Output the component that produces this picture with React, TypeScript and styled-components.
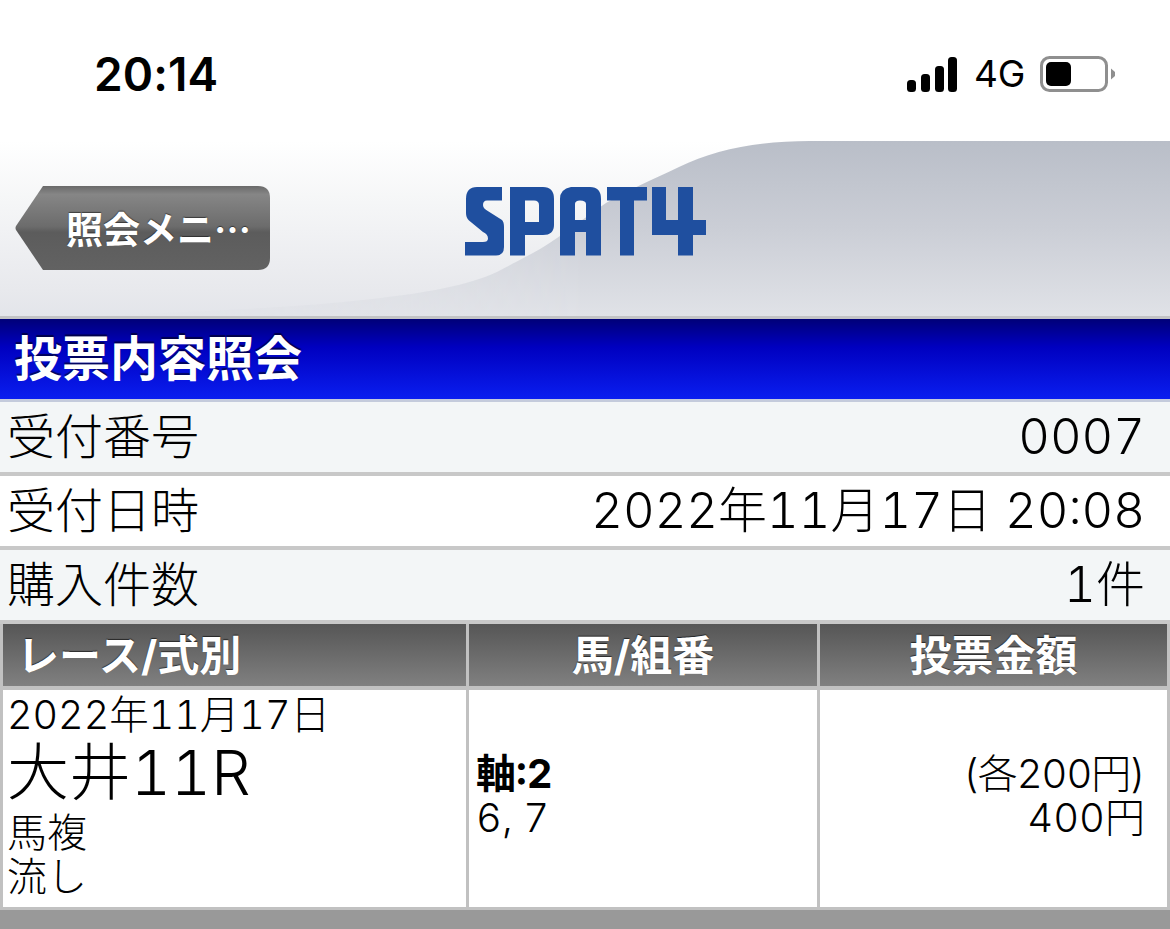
import React from "react";
import styled, { createGlobalStyle } from "styled-components";

const Global = createGlobalStyle`
  html, body { margin: 0; padding: 0; background: #fff; }
  body {
    font-family: "Inter", "Noto Sans CJK JP", sans-serif;
    font-variant-numeric: tabular-nums;
    color: #000;
  }
  * { box-sizing: border-box; }
`;

const Page = styled.div`
  width: 1170px;
  height: 929px;
  overflow: hidden;
  display: flex;
  flex-direction: column;
  background: #999;
`;

const StatusBar = styled.div`
  height: 141px;
  flex: none;
  background: #fff;
  display: flex;
  justify-content: space-between;
  align-items: flex-start;
  padding: 49px 54px 0 94px;
`;
const Time = styled.div`
  font-size: 46px;
  line-height: 50px;
  font-weight: 600;
  font-variant-numeric: normal;
  letter-spacing: 0.1px;
  color: #000;
`;
const StatusIcons = styled.div`
  display: flex;
  align-items: center;
  margin-top: 7px;
  height: 36px;
`;
const Network = styled.span`
  font-size: 37px;
  line-height: 36px;
  font-weight: 400;
  margin: 0 15px 0 16px;
  letter-spacing: -0.3px;
`;

const Header = styled.header`
  position: relative;
  height: 175px;
  flex: none;
  background: linear-gradient(#ffffff 0%, #f5f6f7 35%, #e8e9ed 85%, #e3e5ea 100%);
  display: flex;
  align-items: flex-start;
  padding: 45px 0 0 15px;
`;
const Swoosh = styled.svg`
  position: absolute;
  inset: 0;
`;
const BackButton = styled.div`
  position: relative;
  width: 255px;
  height: 84px;
  flex: none;
  display: flex;
  align-items: center;
  padding: 0 0 0 51px;
  color: #fff;
  font-family: "Noto Sans CJK JP", sans-serif;
  font-size: 37px;
  font-weight: 700;
  white-space: nowrap;
  text-shadow: 0 -1px 1px rgba(0, 0, 0, 0.5);
`;
const BackShape = styled.svg`
  position: absolute;
  inset: 0;
`;
const BackLabel = styled.span`
  position: relative;
`;
const Logo = styled.svg`
  position: relative;
  margin: 1px 0 0 195px;
  flex: none;
  filter: blur(0.6px);
`;

const TitleBar = styled.h1`
  margin: 0;
  height: 86px;
  flex: none;
  border-top: 3px solid #c2c3c5;
  border-bottom: 3px solid #c4cbdc;
  background: linear-gradient(#000078 0%, #0000c0 35%, #0a1ef0 100%);
  color: #fff;
  font-size: 48px;
  line-height: 79px;
  font-weight: 700;
  padding-left: 14px;
  text-shadow: 0 -2px 1px rgba(0, 0, 0, 0.55);
`;

const InfoRow = styled.div<{ $shaded?: boolean }>`
  height: 74px;
  flex: none;
  display: flex;
  justify-content: space-between;
  align-items: center;
  padding: 0 25px 0 7px;
  border-bottom: 4px solid #c8c8c8;
  background: ${(p) => (p.$shaded ? "#f3f6f7" : "#ffffff")};
  font-size: 48px;
  line-height: 70px;
  font-weight: 300;
`;
const InfoLabel = styled.span``;
const InfoValue = styled.span`
  font-size: 49px;
`;

const Table = styled.div`
  flex: none;
  display: grid;
  grid-template-columns: 463px 348px 347px;
  column-gap: 3px;
  padding: 0 3px;
  background: #c1c1c1;
`;
const HeadCell = styled.div<{ $left?: boolean }>`
  height: 62px;
  margin-bottom: 4px;
  background: linear-gradient(#565656 0%, #808080 100%);
  color: #fff;
  font-size: 42px;
  line-height: 64px;
  font-weight: 700;
  text-align: ${(p) => (p.$left ? "left" : "center")};
  padding-left: ${(p) => (p.$left ? "14px" : "0")};
  text-shadow: 0 -1px 1px rgba(0, 0, 0, 0.6);
`;
const BodyCell = styled.div<{ $align?: string }>`
  height: 217px;
  margin-bottom: 3px;
  background: #fff;
  display: flex;
  flex-direction: column;
  justify-content: center;
  text-align: ${(p) => p.$align ?? "left"};
  font-size: 40px;
  line-height: 44px;
  font-weight: 300;
`;
const RaceCell = styled(BodyCell)`
  padding-left: 4px;
  justify-content: flex-start;
  padding-top: 3px;
`;
const RaceDate = styled.div`
  font-size: 39.5px;
  line-height: 44px;
`;
const RaceLine = styled.div`
  font-size: 40px;
  line-height: 44px;
`;
const RaceName = styled.div`
  font-size: 62px;
  line-height: 72px;
  margin-bottom: 2px;
`;
const ComboCell = styled(BodyCell)`
  padding-left: 7px;
  padding-bottom: 6px;
`;
const Bold = styled.b`
  font-weight: 700;
`;
const AmountCell = styled(BodyCell)`
  padding-right: 22px;
  padding-bottom: 6px;
`;
const AmountNote = styled.div`
  letter-spacing: -1px;
`;

const Signal = () => (
  <svg width="52" height="36" viewBox="0 0 52 36">
    <rect x="1" y="24" width="9" height="12" rx="3.5" fill="#000" />
    <rect x="15" y="18" width="9" height="18" rx="3.5" fill="#000" />
    <rect x="29" y="10" width="9" height="26" rx="3.5" fill="#000" />
    <rect x="42" y="1" width="9" height="35" rx="3.5" fill="#000" />
  </svg>
);

const Battery = () => (
  <svg width="76" height="36" viewBox="0 0 76 36">
    <rect x="1.5" y="1.5" width="65" height="33" rx="8" fill="none" stroke="#8f8f8f" strokeWidth="3" />
    <rect x="6" y="6" width="25" height="24" rx="5" fill="#000" />
    <path d="M71 12.5 L75 16 V20 L71 23.5 Z" fill="#8f8f8f" />
  </svg>
);

export default function App() {
  return (
    <Page lang="ja">
      <Global />
      <StatusBar>
        <Time>20:14</Time>
        <StatusIcons>
          <Signal />
          <Network>4G</Network>
          <Battery />
        </StatusIcons>
      </StatusBar>
      <Header>
        <Swoosh width="1170" height="175" viewBox="0 0 1170 175">
          <defs>
            <linearGradient id="sw" x1="0" y1="0" x2="0" y2="1">
              <stop offset="0" stopColor="#b9bec8" />
              <stop offset="0.5" stopColor="#cbced6" />
              <stop offset="1" stopColor="#e0e2e7" />
            </linearGradient>
            <linearGradient id="fade" x1="0" y1="0" x2="1" y2="0">
              <stop offset="0.05" stopColor="#fff" stopOpacity="0" />
              <stop offset="0.5" stopColor="#fff" stopOpacity="1" />
            </linearGradient>
            <mask id="swMask">
              <rect width="1170" height="175" fill="url(#fade)" />
            </mask>
          </defs>
          <path
            d="M1170 0 H810 C 760 0 715 8 679 26 C 650 40 630 48 606 62 C 580 80 555 100 533 112 C 510 124 500 130 485 136 C 450 148 420 152 388 156 C 330 164 260 168 100 175 H1170 Z"
            fill="url(#sw)"
            mask="url(#swMask)"
          />
        </Swoosh>
        <BackButton>
          <BackShape width="255" height="84" viewBox="0 0 255 84">
            <defs>
              <linearGradient id="bk" x1="0" y1="0" x2="0" y2="1">
                <stop offset="0" stopColor="#6a6a6a" />
                <stop offset="0.1" stopColor="#868686" />
                <stop offset="0.48" stopColor="#6c6c6c" />
                <stop offset="0.55" stopColor="#5c5c5c" />
                <stop offset="1" stopColor="#626262" />
              </linearGradient>
            </defs>
            <path
              d="M28 0 H243 Q255 0 255 12 V72 Q255 84 243 84 H28 L1 44 Q0 42 1 40 Z"
              fill="url(#bk)"
            />
          </BackShape>
          <BackLabel>照会メニ…</BackLabel>
        </BackButton>
        <Logo width="241" height="69" viewBox="0 0 241 69" fill="#1f4f9f">
          <path d="M37 0 V13.5 H22 Q18 13.5 18 18 Q18 21 22 23.5 L37 33 Q39 35 39 40 V60 Q39 68.5 31 68.5 H0 V55 H18 Q23 55 23 51.5 Q23 47 18 45 L4 33.5 Q1 31 1 26 V12 Q1 0 12 0 Z" />
          <path d="M45 0 H78 Q89 0 89 12 V38 Q89 48 78 48 H60 V68.5 H45 Z M60 13.5 V35 H74 V18 Q74 13.5 69 13.5 Z" />
          <path d="M106 0 H125 Q136 0 136 12 V68.5 H121 V45 H110 V68.5 H95 V12 Q95 2 106 0 Z M110 17 V33 H121 V17 Q121 13.5 115 13.5 Q110 13.5 110 17 Z" />
          <path d="M142 0 H182 V13.5 H169 V68.5 H155 V13.5 H142 Z" />
          <path d="M187 0 H201 V33 H213 V0 H228 V33 H241 V48 H228 V68.5 H213 V48 H187 Z" />
        </Logo>
      </Header>
      <TitleBar>投票内容照会</TitleBar>
      <InfoRow $shaded>
        <InfoLabel>受付番号</InfoLabel>
        <InfoValue>0007</InfoValue>
      </InfoRow>
      <InfoRow>
        <InfoLabel>受付日時</InfoLabel>
        <InfoValue>2022年11月17日 20:08</InfoValue>
      </InfoRow>
      <InfoRow $shaded>
        <InfoLabel>購入件数</InfoLabel>
        <InfoValue>1件</InfoValue>
      </InfoRow>
      <Table>
        <HeadCell $left>レース/式別</HeadCell>
        <HeadCell>馬/組番</HeadCell>
        <HeadCell>投票金額</HeadCell>
        <RaceCell>
          <RaceDate>2022年11月17日</RaceDate>
          <RaceName>大井11R</RaceName>
          <RaceLine>馬複</RaceLine>
          <RaceLine>流し</RaceLine>
        </RaceCell>
        <ComboCell>
          <div>
            <Bold>軸:2</Bold>
          </div>
          <div>6, 7</div>
        </ComboCell>
        <AmountCell $align="right">
          <AmountNote>(各200円)</AmountNote>
          <div>400円</div>
        </AmountCell>
      </Table>
    </Page>
  );
}
